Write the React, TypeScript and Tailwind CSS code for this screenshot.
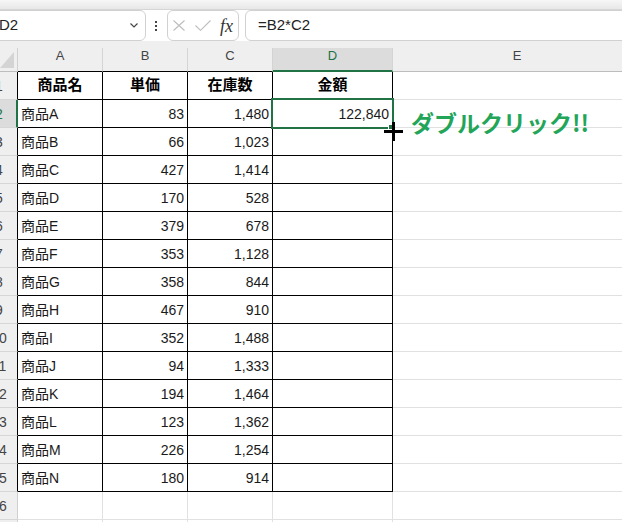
import React from 'react';

const data: [string, string, string, string][] = [
  ['商品A', '83', '1,480', '122,840'],
  ['商品B', '66', '1,023', ''],
  ['商品C', '427', '1,414', ''],
  ['商品D', '170', '528', ''],
  ['商品E', '379', '678', ''],
  ['商品F', '353', '1,128', ''],
  ['商品G', '358', '844', ''],
  ['商品H', '467', '910', ''],
  ['商品I', '352', '1,488', ''],
  ['商品J', '94', '1,333', ''],
  ['商品K', '194', '1,464', ''],
  ['商品L', '123', '1,362', ''],
  ['商品M', '226', '1,254', ''],
  ['商品N', '180', '914', ''],
];

function RowHeader({ n, selected, inTable }: { n: number; selected?: boolean; inTable?: boolean }) {
  return (
    <div
      className={`flex h-full w-[18px] shrink-0 items-center overflow-hidden border-b border-b-[#d6d6d6] text-[14px] ${
        selected
          ? 'border-r-2 border-r-[#217346] bg-[#dcdcdc] text-[#217346]'
          : inTable
          ? 'border-r border-r-black bg-[#efefef] text-[#444]'
          : 'border-r border-r-[#d0d0d0] bg-[#efefef] text-[#444]'
      }`}
    >
      <div className="-ml-[20px] w-[38px] shrink-0 pt-[2px] text-center">{n}</div>
    </div>
  );
}

function TitleRow() {
  const cell = 'flex h-full shrink-0 items-center justify-center border-r border-b border-r-black border-b-black text-[15px] font-bold text-black';
  return (
    <div className="flex h-[28px]">
      <RowHeader n={1} inTable />
      <div className={`${cell} w-[85px]`}>商品名</div>
      <div className={`${cell} w-[85px]`}>単価</div>
      <div className={`${cell} w-[85px]`}>在庫数</div>
      <div className={`${cell} w-[120px]`}>金額</div>
      <div className="h-full w-[248px] shrink-0 border-b border-b-[#e1e1e1]" />
    </div>
  );
}

function DataRow({ n, row }: { n: number; row: [string, string, string, string] }) {
  const cell = 'flex h-full shrink-0 items-center border-r border-b border-r-black border-b-black px-[3px] pt-[1px] text-[14px] text-[#1a1a1a]';
  return (
    <div className="flex h-[28px]">
      <RowHeader n={n} inTable selected={n === 2} />
      <div className={`${cell} w-[85px]`}>{row[0]}</div>
      <div className={`${cell} w-[85px] justify-end`}>{row[1]}</div>
      <div className={`${cell} w-[85px] justify-end`}>{row[2]}</div>
      <div className={`${cell} w-[120px] justify-end`}>{row[3]}</div>
      <div className="h-full w-[248px] shrink-0 border-b border-b-[#e1e1e1]" />
    </div>
  );
}

function EmptyRow({ n }: { n: number }) {
  const cell = 'h-full shrink-0 border-r border-b border-r-[#e1e1e1] border-b-[#e1e1e1]';
  return (
    <div className="flex h-[28px]">
      <RowHeader n={n} />
      <div className={`${cell} w-[85px]`} />
      <div className={`${cell} w-[85px]`} />
      <div className={`${cell} w-[85px]`} />
      <div className={`${cell} w-[120px]`} />
      <div className="h-full w-[248px] shrink-0 border-b border-b-[#e1e1e1]" />
    </div>
  );
}

export default function App() {
  const colHead = 'flex h-full shrink-0 items-center justify-center pb-[7px] text-[13px] border-r border-r-[#d4d4d4]';
  return (
    <div className="relative h-[522px] w-[622px] overflow-hidden bg-white font-['Liberation_Sans','Noto_Sans_CJK_JP',sans-serif]">
      {/* ribbon edge */}
      <div className="h-[10px] border-b border-b-[#d6d6d6] bg-gradient-to-b from-[#f6f6f6] to-[#e8e8e8]" />

      {/* formula bar */}
      <div className="flex h-[31px] items-stretch bg-white">
        <div className="-ml-[10px] flex w-[156px] shrink-0 items-center justify-between rounded-[6px] border border-[#d1d1d1] pl-[8px] pr-[7px]">
          <span className="text-[15px] text-[#222]">D2</span>
          <svg width="8" height="5" viewBox="0 0 8 5">
            <path d="M0.5 0.5 L4 4 L7.5 0.5" fill="none" stroke="#444" strokeWidth="1.2" />
          </svg>
        </div>
        <div className="flex w-[21px] shrink-0 flex-col items-center justify-center gap-[2px] pr-[2px]">
          <span className="h-[2px] w-[2px] bg-[#444]" />
          <span className="h-[2px] w-[2px] bg-[#444]" />
          <span className="h-[2px] w-[2px] bg-[#444]" />
        </div>
        <div className="flex w-[72px] shrink-0 items-center rounded-[6px] border border-[#d1d1d1]">
          <svg className="ml-[5px]" width="12" height="11" viewBox="0 0 12 11">
            <path d="M0.5 0.5 L11.5 10.5 M11.5 0.5 L0.5 10.5" stroke="#bdbdbd" strokeWidth="1.1" />
          </svg>
          <svg className="ml-[10px]" width="16" height="11" viewBox="0 0 16 11">
            <path d="M0.5 5.5 L5.5 10.3 L15.5 0.5" fill="none" stroke="#bdbdbd" strokeWidth="1.1" />
          </svg>
          <span className="ml-[9px] font-['Liberation_Serif',serif] text-[18px] italic leading-none text-[#333]">fx</span>
        </div>
        <div className="ml-[6px] flex w-[420px] shrink-0 items-center rounded-[6px] border border-[#d1d1d1] pl-[12px]">
          <span className="text-[15px] text-[#222]">=B2*C2</span>
        </div>
      </div>

      {/* gap above headers */}
      <div className="h-[7px] bg-[#efefef]" />

      {/* column headers */}
      <div className="flex h-[24px] bg-[#efefef] text-[#444]">
        <div className="relative h-full w-[18px] shrink-0 border-r border-b border-r-[#d0d0d0] border-b-[#bdbdbd]">
          <svg className="absolute left-0 top-[4px]" width="15" height="17" viewBox="0 0 15 17">
            <polygon points="14,0 14,16 0,16" fill="#d4d4d4" />
          </svg>
        </div>
        <div className={`${colHead} w-[85px] border-b border-b-black`}>A</div>
        <div className={`${colHead} w-[85px] border-b border-b-black`}>B</div>
        <div className={`${colHead} w-[85px] border-b border-b-black`}>C</div>
        <div className={`${colHead} w-[120px] border-b-2 border-b-[#217346] bg-[#dcdcdc] text-[#217346]`}>D</div>
        <div className="flex h-full w-[248px] shrink-0 items-center justify-center border-b border-b-[#bdbdbd] pb-[7px] text-[13px]">E</div>
      </div>

      {/* grid */}
      <TitleRow />
      {data.map((row, i) => (
        <DataRow key={i} n={i + 2} row={row} />
      ))}
      <EmptyRow n={16} />
      <EmptyRow n={17} />

      {/* active cell D2 */}
      <div className="absolute left-[271px] top-[98px] h-[31px] w-[123px] border-2 border-[#217346]" />
      <div className="absolute left-[388px] top-[124px] h-[6px] w-[6px] border border-white bg-[#217346]" />

      {/* fill-handle cursor */}
      <div className="absolute left-[384px] top-[130px] h-[3px] w-[19px] bg-black" />
      <div className="absolute left-[392px] top-[122px] h-[19px] w-[3px] bg-black" />

      {/* callout */}
      <div className="absolute left-[411px] top-[111px] font-['Noto_Sans_CJK_JP',sans-serif] text-[23px] font-bold leading-none text-[#22a559]">
        ダブルクリック!!
      </div>
    </div>
  );
}
